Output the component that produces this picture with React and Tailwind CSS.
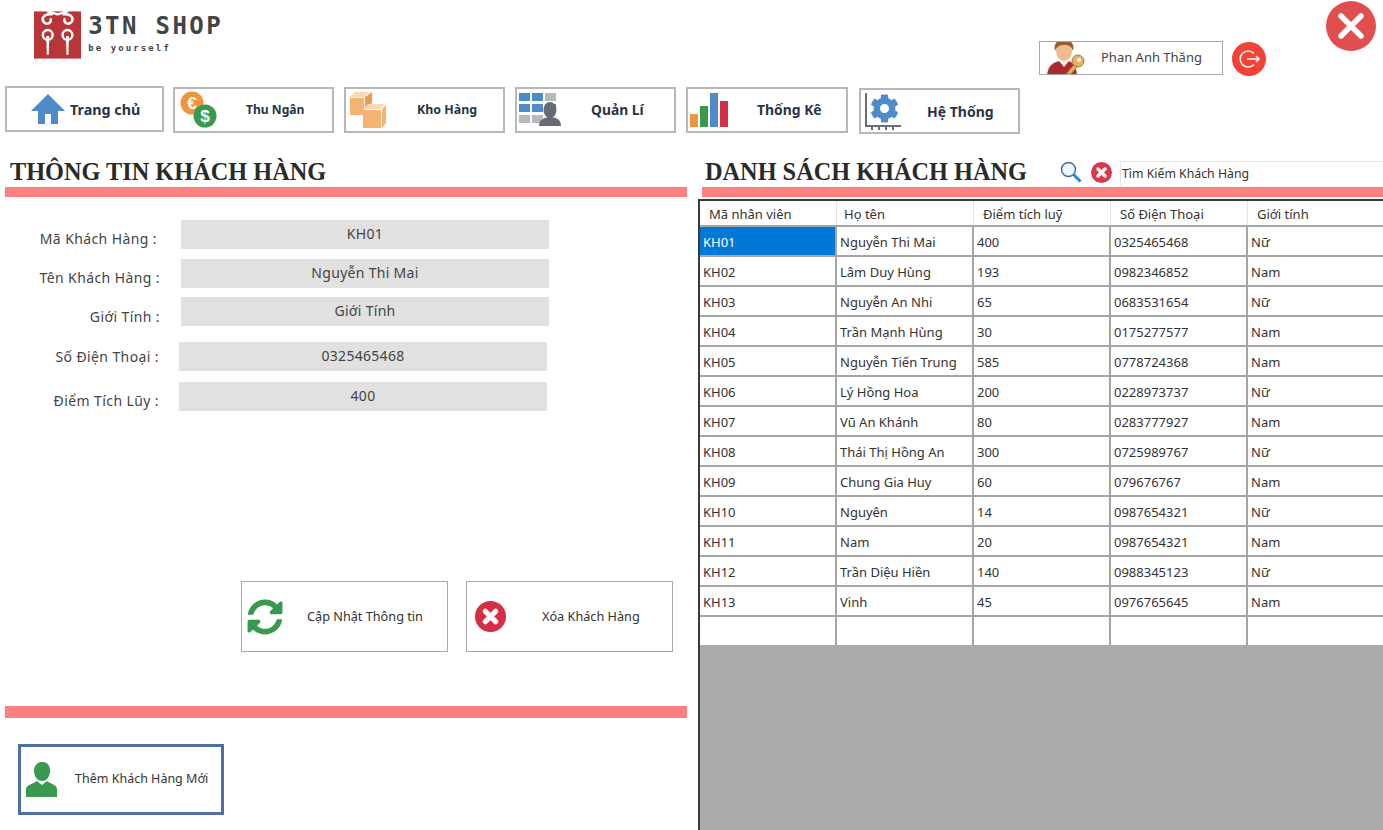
import React from 'react';
import { FaCog, FaSyncAlt } from 'react-icons/fa';

const customers = [
  ['KH01', 'Nguyễn Thi Mai', '400', '0325465468', 'Nữ'],
  ['KH02', 'Lâm Duy Hùng', '193', '0982346852', 'Nam'],
  ['KH03', 'Nguyễn An Nhi', '65', '0683531654', 'Nữ'],
  ['KH04', 'Trần Mạnh Hùng', '30', '0175277577', 'Nam'],
  ['KH05', 'Nguyễn Tiến Trung', '585', '0778724368', 'Nam'],
  ['KH06', 'Lý Hồng Hoa', '200', '0228973737', 'Nữ'],
  ['KH07', 'Vũ An Khánh', '80', '0283777927', 'Nam'],
  ['KH08', 'Thái Thị Hồng An', '300', '0725989767', 'Nữ'],
  ['KH09', 'Chung Gia Huy', '60', '079676767', 'Nam'],
  ['KH10', 'Nguyên', '14', '0987654321', 'Nữ'],
  ['KH11', 'Nam', '20', '0987654321', 'Nam'],
  ['KH12', 'Trần Diệu Hiền', '140', '0988345123', 'Nữ'],
  ['KH13', 'Vinh', '45', '0976765645', 'Nam'],
  ['', '', '', '', ''],
];

const headers = ['Mã nhân viên', 'Họ tên', 'Điểm tích luỹ', 'Số Điện Thoại', 'Giới tính'];

function LogoMark() {
  return (
    <svg width="48" height="48" viewBox="0 0 48 48">
      <rect width="48" height="48" fill="#b93638" />
      <g fill="none" stroke="#fff" strokeWidth="2.5" strokeLinecap="round">
        <path d="M24 3 L14 0 M24 3 L34 0" />
        <path d="M18 3 C10 2 7 7 10 11 C13 14 18 12 17 8" />
        <path d="M30 3 C38 2 41 7 38 11 C35 14 30 12 31 8" />
        <circle cx="14" cy="24" r="5" />
        <circle cx="34" cy="24" r="5" />
      </g>
      <path d="M12.5 25 H15.5 L15 44 H13 Z M32.5 25 H35.5 L35 44 H33 Z" fill="#fff" />
    </svg>
  );
}

function HomeIcon() {
  return (
    <svg width="36" height="32" viewBox="0 0 36 32">
      <path d="M18 1 L35 18 H28 V31 H21 V21 H15 V31 H8 V18 H1 Z" fill="#4f8ac9" />
    </svg>
  );
}

function CoinsIcon() {
  return (
    <svg width="38" height="38" viewBox="0 0 38 38">
      <circle cx="12" cy="12" r="11.5" fill="#f0953f" />
      <text x="12" y="18" textAnchor="middle" fontSize="17" fontWeight="700" fill="#fff" fontFamily="Liberation Sans">€</text>
      <circle cx="25" cy="25" r="11.5" fill="#38994f" />
      <text x="25" y="31" textAnchor="middle" fontSize="17" fontWeight="700" fill="#fff" fontFamily="Liberation Sans">$</text>
    </svg>
  );
}

function BoxesIcon() {
  return (
    <svg width="37" height="37" viewBox="0 0 37 37">
      <path d="M0 5 L5 0 H19 L14 5 Z" fill="#fbd7b5" />
      <rect x="0" y="6" width="14" height="17" fill="#f6b273" />
      <path d="M15 5 L22 0 V11 L15 17 Z" fill="#f09a4b" />
      <path d="M13 17 L18 12 H35 L30 17 Z" fill="#fbd7b5" />
      <rect x="13" y="18" width="18" height="18" fill="#f6b273" />
      <path d="M32 17 L36 13 V31 L32 36 Z" fill="#f6b273" />
    </svg>
  );
}

function ManageIcon() {
  const cells = [
    [0, 0, '#4f8ac9'], [13, 0, '#4f8ac9'], [26, 0, '#b8b9bd'],
    [0, 11, '#4f8ac9'], [13, 11, '#4f8ac9'], [26, 11, '#4f8ac9'],
    [0, 22, '#b8b9bd'], [13, 22, '#b8b9bd'],
  ];
  return (
    <svg width="42" height="34" viewBox="0 0 42 34">
      {cells.map(([x, y, c]) => (
        <rect key={`${x}-${y}`} x={x} y={y} width="11" height="8" fill={c} />
      ))}
      <ellipse cx="31" cy="17" rx="6.5" ry="8" fill="#666a73" />
      <path d="M20 33 C20 26 26 25 29 24 H33 C37 25 42 26 42 33 Z" fill="#666a73" />
    </svg>
  );
}

function BarsIcon() {
  return (
    <svg width="38" height="34" viewBox="0 0 38 34">
      <rect x="0" y="21" width="8" height="13" fill="#f0953f" />
      <rect x="10" y="13" width="8" height="21" fill="#38994f" />
      <rect x="20" y="0" width="8" height="34" fill="#4f8ac9" />
      <rect x="30" y="8" width="8" height="26" fill="#d32f45" />
    </svg>
  );
}

function SystemIcon() {
  return (
    <div className="relative h-[37px] w-[37px] shrink-0">
      <svg width="37" height="37" viewBox="0 0 37 37" className="absolute left-0 top-0">
        <path d="M1 0 V33 H36" fill="none" stroke="#6b6e76" strokeWidth="2" />
        <path d="M7 34v3M14 34v3M21 34v3M28 34v3" stroke="#6b6e76" strokeWidth="2" />
      </svg>
      <FaCog className="absolute left-[5px] top-[1px] h-[29px] w-[29px] text-[#4f8ac9]" />
    </div>
  );
}

function UserKeyIcon() {
  return (
    <svg width="40" height="35" viewBox="0 0 40 35">
      <path d="M1 35 C2 25 8 22 14 21 H22 C27 22 30 26 31 35 Z" fill="#a92b2b" />
      <path d="M13 21 L18 27 L23 21 Z" fill="#f4f1ea" />
      <ellipse cx="18" cy="11" rx="8" ry="10" fill="#eebd8f" />
      <path d="M9 11 C7 2 13 0 18 0 C24 0 29 3 27 11 C25 5 21 5 18 5 C14 5 11 6 9 11 Z" fill="#9a5b2d" />
      <circle cx="32" cy="21" r="6" fill="#e7b263" stroke="#a87a35" strokeWidth="1" />
      <circle cx="33" cy="20" r="2" fill="#fff" />
      <path d="M28 25 L20 34 H25 L31 27 Z" fill="#e7b263" stroke="#a87a35" strokeWidth="1" />
    </svg>
  );
}

function LogoutIcon() {
  return (
    <svg width="34" height="34" viewBox="0 0 34 34">
      <circle cx="17" cy="17" r="17" fill="#f44336" />
      <path d="M22 11.5 A8 8 0 1 0 22 22.5" fill="none" stroke="#fff" strokeWidth="1.6" />
      <path d="M15 17 H27 M24 14 L27 17 L24 20" fill="none" stroke="#fff" strokeWidth="1.6" />
    </svg>
  );
}

function CloseIcon() {
  return (
    <svg width="50" height="50" viewBox="0 0 50 50">
      <circle cx="25" cy="25" r="25" fill="#e04f50" />
      <path d="M15 15 L35 35 M35 15 L15 35" stroke="#fff" strokeWidth="5.5" strokeLinecap="round" />
    </svg>
  );
}

function RoundX({ size, color }) {
  return (
    <svg width={size} height={size} viewBox="0 0 30 30" className="shrink-0">
      <circle cx="15" cy="15" r="15" fill={color} />
      <path d="M10 10 L20 20 M20 10 L10 20" stroke="#fff" strokeWidth="5" strokeLinecap="round" />
    </svg>
  );
}

function SearchIcon() {
  return (
    <svg width="22" height="22" viewBox="0 0 22 22" className="shrink-0">
      <circle cx="8.5" cy="8.5" r="7" fill="#eef6fc" stroke="#4a6f96" strokeWidth="1.5" />
      <path d="M13.5 13.5 L20.5 20.5" stroke="#1e88e5" strokeWidth="3" />
    </svg>
  );
}

function PersonIcon() {
  return (
    <svg width="32" height="36" viewBox="0 0 32 36">
      <path d="M8 9 C8 3 12 0 16 0 C21 0 24 3 24 9 C24 14 21 19 16 19 C11 19 8 14 8 9 Z" fill="#38994f" />
      <path d="M0 35 V27 C0 23 7 22 11 19 L16 23 L21 19 C25 22 31 23 31 27 V35 Z" fill="#38994f" />
    </svg>
  );
}

function NavButton({ icon, label, className, labelClass }) {
  return (
    <button className={`flex h-[46px] items-center border-2 border-[#b8b8b8] bg-white font-bold text-[#2a3442] ${className}`}>
      {icon}
      <span className={labelClass}>{label}</span>
    </button>
  );
}

function Field({ label, value, top, left, labelTop }) {
  return (
    <div className={`flex ${top}`}>
      <div className={`w-[160px] text-right text-[14px] leading-5 tracking-[0.4px] text-[#444] ${labelTop}`}>{label}</div>
      <div className={`flex h-[29px] w-[368px] items-start justify-center bg-[#e1e1e1] pt-[4px] text-[14px] leading-5 tracking-[0.3px] text-[#444] ${left}`}>
        {value}
      </div>
    </div>
  );
}

function ActionButton({ icon, label, className, labelClass }) {
  return (
    <button className={`flex h-[71px] w-[207px] items-center border border-[#a8a8a8] bg-white text-[12.7px] text-[#333] ${className}`}>
      {icon}
      <span className={labelClass}>{label}</span>
    </button>
  );
}

export default function App() {
  return (
    <div className="h-[830px] w-[1383px] overflow-hidden bg-white font-['Noto_Sans','Open_Sans',sans-serif]">
      {/* top bar */}
      <div className="flex h-[86px] items-start">
        <div className="ml-[34px] mt-[11px] flex w-[189px] shrink-0">
          <LogoMark />
          <div className="ml-[7px] font-['DejaVu_Sans_Mono',monospace] font-bold text-[#444]">
            <div className="text-[24px] leading-[30px] tracking-[2.4px] whitespace-nowrap">3TN SHOP</div>
            <div className="mt-[1px] text-[9px] leading-[12px] tracking-[2.1px] whitespace-nowrap">be yourself</div>
          </div>
        </div>
        <div className="ml-[816px] mt-[41px] flex h-[34px] w-[184px] items-center overflow-hidden border border-[#a8a8a8]">
          <div className="ml-[6px] mt-[-2px]"><UserKeyIcon /></div>
          <span className="ml-[15px] text-[13px] whitespace-nowrap text-[#444]">Phan Anh Thăng</span>
        </div>
        <div className="ml-[9px] mt-[42px]"><LogoutIcon /></div>
        <div className="ml-[60px] mt-[1px]"><CloseIcon /></div>
      </div>

      {/* nav */}
      <div className="flex h-[47px] items-start pl-[5px]">
        <NavButton icon={<div className="ml-[23px]"><HomeIcon /></div>} label="Trang chủ" className="w-[159px]" labelClass="ml-[4px] mt-[1px] text-[14.3px]" />
        <NavButton icon={<div className="ml-[5px]"><CoinsIcon /></div>} label="Thu Ngân" className="ml-[9px] mt-[1px] w-[161px]" labelClass="ml-[28px] text-[12.1px]" />
        <NavButton icon={<div className="ml-[4px]"><BoxesIcon /></div>} label="Kho Hàng" className="ml-[10px] mt-[1px] w-[161px]" labelClass="ml-[30px] text-[12.4px]" />
        <NavButton icon={<div className="ml-[2px]"><ManageIcon /></div>} label="Quản Lí" className="ml-[10px] mt-[1px] w-[161px]" labelClass="ml-[30px] text-[13.8px]" />
        <NavButton icon={<div className="ml-[2px]"><BarsIcon /></div>} label="Thống Kê" className="ml-[10px] mt-[1px] w-[162px]" labelClass="ml-[29px] text-[13.9px]" />
        <NavButton icon={<div className="ml-[4px]"><SystemIcon /></div>} label="Hệ Thống" className="ml-[11px] mt-[2px] h-[45px] w-[161px]" labelClass="ml-[25px] text-[14px]" />
      </div>

      <div className="flex">
        {/* customer info */}
        <div className="w-[698px] shrink-0">
          <h2 className="ml-[10px] flex h-[54px] items-end font-['Liberation_Serif',serif] text-[24.3px] leading-[30px] font-bold whitespace-nowrap text-[#2a2a2a]">
            THÔNG TIN KHÁCH HÀNG
          </h2>
          <div className="ml-[5px] h-[10px] w-[682px] bg-[#ff8080]" />

          <div className="pt-[23px]">
            <Field label="Mã Khách Hàng :" value="KH01" top="" left="ml-[21px]" labelTop="pt-[9px] pr-[3px]" />
            <Field label="Tên Khách Hàng :" value="Nguyễn Thi Mai" top="mt-[10px]" left="ml-[21px]" labelTop="pt-[9px]" />
            <Field label="Giới Tính :" value="Giới Tính" top="mt-[9px]" left="ml-[21px]" labelTop="pt-[10px]" />
            <Field label="Số Điện Thoại :" value="0325465468" top="mt-[15px]" left="ml-[19px]" labelTop="pt-[5px] pr-[1px]" />
            <Field label="Điểm Tích Lũy :" value="400" top="mt-[11px]" left="ml-[19px]" labelTop="pt-[9px] pr-[1px]" />
          </div>

          <div className="mt-[170px] flex pl-[241px]">
            <ActionButton
              icon={<FaSyncAlt className="ml-[5px] h-[36px] w-[36px] shrink-0 text-[#38994f]" />}
              label="Cập Nhật Thông tin"
              labelClass="ml-[24px] whitespace-nowrap"
            />
            <ActionButton
              icon={<div className="ml-[8px]"><RoundX size={31} color="#d32f45" /></div>}
              label="Xóa Khách Hàng"
              className="ml-[18px]"
              labelClass="ml-[36px] whitespace-nowrap"
            />
          </div>

          <div className="ml-[5px] mt-[54px] h-[12px] w-[682px] bg-[#ff8080]" />

          <button className="ml-[18px] mt-[26px] flex h-[71px] w-[206px] items-center border-[3px] border-[#4d6fa5] bg-white text-[12.5px] text-[#333]">
            <div className="ml-[5px]"><PersonIcon /></div>
            <span className="ml-[17px] whitespace-nowrap">Thêm Khách Hàng Mới</span>
          </button>
        </div>

        {/* customer list */}
        <div className="min-w-0 flex-1">
          <div className="flex h-[54px] items-end">
            <h2 className="ml-[7px] font-['Liberation_Serif',serif] text-[24.3px] leading-[30px] font-bold whitespace-nowrap text-[#2a2a2a]">
              DANH SÁCH KHÁCH HÀNG
            </h2>
            <div className="ml-[33px] mb-[4px] flex items-center">
              <SearchIcon />
              <div className="ml-[9px]"><RoundX size={21} color="#d9394a" /></div>
            </div>
            <div className="ml-[8px] mb-[1px] h-[25px] flex-1 border-t border-l border-[#e4e4e4] pl-[1px] text-[12.3px] leading-[23px] text-[#333]">
              Tìm Kiếm Khách Hàng
            </div>
          </div>
          <div className="ml-[4px] h-[10px] bg-[#ff8080]" />

          <div className="mt-[2px] h-[631px] border-t-2 border-l-2 border-[#3a3a3a] bg-[#ababab]">
            <table className="w-[683px] table-fixed border-separate border-spacing-0 bg-white text-[13px] text-[#333]">
              <thead>
                <tr className="h-[24px]">
                  {headers.map((h, i) => (
                    <th
                      key={h}
                      className={`w-[137px] border-r border-[#e4e4e4] pt-[4px] text-left font-normal ${i === 1 ? 'pl-[7px]' : 'pl-[9px]'}`}
                    >
                      {h}
                    </th>
                  ))}
                </tr>
              </thead>
              <tbody>
                {customers.map((row, r) => (
                  <tr key={r} className="h-[30px]">
                    {row.map((cell, c) => (
                      <td
                        key={c}
                        className={`border-t-2 border-r-2 border-[#a6a6a6] pt-[4px] pl-[3px] ${r === 0 && c === 0 ? 'bg-[#0078d7] text-white' : ''}`}
                      >
                        {cell}
                      </td>
                    ))}
                  </tr>
                ))}
              </tbody>
            </table>
          </div>
        </div>
      </div>
    </div>
  );
}
